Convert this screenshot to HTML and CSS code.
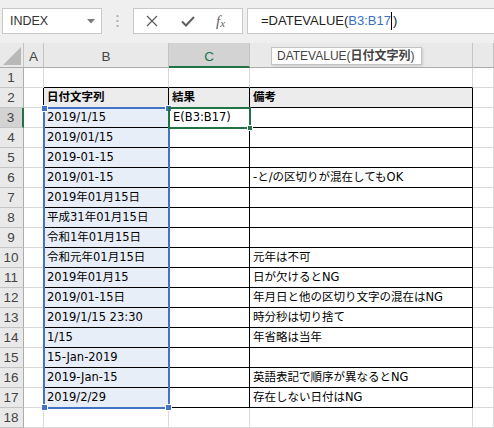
FILE: index.html
```html
<!DOCTYPE html>
<html lang="ja">
<head>
<meta charset="utf-8">
<title>DATEVALUE</title>
<link rel="stylesheet" href="styles.css">
</head>
<body>
<div class="app">
  <div class="bar">
    <div class="namebox">
      <span class="nb-text">INDEX</span>
      <svg class="nb-arrow" width="8" height="5" viewBox="0 0 8 5"><path d="M0 0 H8 L4 4.5 Z" fill="#7a7a7a"/></svg>
    </div>
    <div class="grip">
      <svg width="3" height="12" viewBox="0 0 3 12"><rect x="0.5" y="0" width="2" height="2" fill="#b0b0b0"/><rect x="0.5" y="5" width="2" height="2" fill="#b0b0b0"/><rect x="0.5" y="10" width="2" height="2" fill="#b0b0b0"/></svg>
    </div>
    <div class="fbtns">
      <svg class="ic" width="12" height="12" viewBox="0 0 12 12"><path d="M1 1 L11 11 M11 1 L1 11" stroke="#5f5f5f" stroke-width="1.3" fill="none"/></svg>
      <svg class="ic" width="14" height="11" viewBox="0 0 14 11"><path d="M1 5.5 L5 9.5 L13 1" stroke="#5f5f5f" stroke-width="2" fill="none"/></svg>
      <span class="fx"><i>f</i><sub>x</sub></span>
    </div>
    <div class="finput">=DATEVALUE(<span class="ref">B3:B17</span><span class="caret"></span>)</div>
  </div>

  <div class="sheet">
    <div class="corner"><svg width="18" height="18" viewBox="0 0 18 18"><path d="M18 0 V18 H0 Z" fill="#b8b8b8"/></svg></div>
    <div class="ch">A</div>
    <div class="ch">B</div>
    <div class="ch sel">C</div>
    <div class="ch wide"></div>
    <div class="ch"></div>

    <div class="rh">1</div>
    <div class="c"></div>
    <div class="c top"></div>
    <div class="c top"></div>
    <div class="c top"></div>
    <div class="c"></div>

    <div class="rh">2</div>
    <div class="c lft"></div>
    <div class="c t hd">日付文字列</div>
    <div class="c t hd">結果</div>
    <div class="c t hd">備考</div>
    <div class="c"></div>

    <div class="rh sel">3</div>
    <div class="c lft"></div>
    <div class="c t s">2019/1/15</div>
    <div class="c t act">E(B3:B17)</div>
    <div class="c t"></div>
    <div class="c"></div>

    <div class="rh">4</div>
    <div class="c lft"></div>
    <div class="c t s">2019/01/15</div>
    <div class="c t"></div>
    <div class="c t"></div>
    <div class="c"></div>

    <div class="rh">5</div>
    <div class="c lft"></div>
    <div class="c t s">2019-01-15</div>
    <div class="c t"></div>
    <div class="c t"></div>
    <div class="c"></div>

    <div class="rh">6</div>
    <div class="c lft"></div>
    <div class="c t s">2019/01-15</div>
    <div class="c t"></div>
    <div class="c t">-と/の区切りが混在してもOK</div>
    <div class="c"></div>

    <div class="rh">7</div>
    <div class="c lft"></div>
    <div class="c t s">2019年01月15日</div>
    <div class="c t"></div>
    <div class="c t"></div>
    <div class="c"></div>

    <div class="rh">8</div>
    <div class="c lft"></div>
    <div class="c t s">平成31年01月15日</div>
    <div class="c t"></div>
    <div class="c t"></div>
    <div class="c"></div>

    <div class="rh">9</div>
    <div class="c lft"></div>
    <div class="c t s">令和1年01月15日</div>
    <div class="c t"></div>
    <div class="c t"></div>
    <div class="c"></div>

    <div class="rh">10</div>
    <div class="c lft"></div>
    <div class="c t s">令和元年01月15日</div>
    <div class="c t"></div>
    <div class="c t">元年は不可</div>
    <div class="c"></div>

    <div class="rh">11</div>
    <div class="c lft"></div>
    <div class="c t s">2019年01月15</div>
    <div class="c t"></div>
    <div class="c t">日が欠けるとNG</div>
    <div class="c"></div>

    <div class="rh">12</div>
    <div class="c lft"></div>
    <div class="c t s">2019/01-15日</div>
    <div class="c t"></div>
    <div class="c t">年月日と他の区切り文字の混在はNG</div>
    <div class="c"></div>

    <div class="rh">13</div>
    <div class="c lft"></div>
    <div class="c t s">2019/1/15 23:30</div>
    <div class="c t"></div>
    <div class="c t">時分秒は切り捨て</div>
    <div class="c"></div>

    <div class="rh">14</div>
    <div class="c lft"></div>
    <div class="c t s">1/15</div>
    <div class="c t"></div>
    <div class="c t">年省略は当年</div>
    <div class="c"></div>

    <div class="rh">15</div>
    <div class="c lft"></div>
    <div class="c t s">15-Jan-2019</div>
    <div class="c t"></div>
    <div class="c t"></div>
    <div class="c"></div>

    <div class="rh">16</div>
    <div class="c lft"></div>
    <div class="c t s">2019-Jan-15</div>
    <div class="c t"></div>
    <div class="c t">英語表記で順序が異なるとNG</div>
    <div class="c"></div>

    <div class="rh">17</div>
    <div class="c lft"></div>
    <div class="c t s">2019/2/29</div>
    <div class="c t"></div>
    <div class="c t">存在しない日付はNG</div>
    <div class="c"></div>

    <div class="rh">18</div>
    <div class="c"></div>
    <div class="c"></div>
    <div class="c"></div>
    <div class="c"></div>
    <div class="c"></div>

    <div class="selbox">
      <span class="h h-tl"></span><span class="h h-tr"></span><span class="h h-bl"></span><span class="h h-br"></span>
    </div>
    <div class="actbox"><span class="fill"></span></div>
    <div class="tip">DATEVALUE(<b>日付文字列</b>)</div>
  </div>
</div>
</body>
</html>
```

FILE: styles.css
```css
html, body {
  margin: 0;
  padding: 0;
}
body {
  width: 494px;
  height: 428px;
  overflow: hidden;
  background: #ffffff;
  font-family: "Liberation Sans", "Noto Sans CJK JP", sans-serif;
}
.app {
  width: 494px;
  height: 428px;
  overflow: hidden;
}

/* ---------- formula bar ---------- */
.bar {
  height: 43px;
  box-sizing: border-box;
  padding-top: 8px;
  background: #efefef;
  display: flex;
  align-items: flex-start;
}
.namebox {
  margin-left: 2px;
  width: 100px;
  height: 26px;
  box-sizing: border-box;
  border: 1px solid #c9c9c9;
  background: #fff;
  display: flex;
  align-items: center;
  justify-content: space-between;
  padding: 0 6px 0 7px;
}
.nb-text {
  font-size: 12.5px;
  color: #333;
}
.grip {
  width: 31px;
  height: 26px;
  display: flex;
  align-items: center;
  justify-content: center;
}
.fbtns {
  width: 110px;
  height: 26px;
  box-sizing: border-box;
  border: 1px solid #c9c9c9;
  background: #fff;
  display: flex;
  align-items: center;
  padding-left: 12px;
  gap: 23px;
}
.fx {
  font-family: "Liberation Serif", serif;
  color: #5f5f5f;
  font-size: 15px;
  line-height: 1;
  margin-left: -2px;
}
.fx sub {
  font-style: italic;
  font-size: 11px;
  vertical-align: -1px;
}
.finput {
  margin-left: 4px;
  flex: 1;
  height: 26px;
  box-sizing: border-box;
  border: 1px solid #c9c9c9;
  border-right: none;
  background: #fff;
  padding-left: 13px;
  font-size: 13px;
  line-height: 24px;
  color: #222;
  white-space: nowrap;
}
.ref {
  color: #3b6fc4;
}
.caret {
  display: inline-block;
  width: 1px;
  height: 18px;
  background: #000;
  vertical-align: -5px;
  margin: 0 0.5px;
}

/* ---------- sheet ---------- */
.sheet {
  position: relative;
  display: grid;
  grid-template-columns: 24px 20px 125px 81px 223px 21px;
  grid-template-rows: 25px repeat(18, 20px);
  font-family: "DejaVu Sans", "Noto Sans CJK JP", sans-serif;
  font-size: 11.5px;
}
.corner {
  background: #e9e9e9;
  box-sizing: border-box;
  border-right: 1px solid #c4c4c4;
  border-bottom: 1px solid #ababab;
  display: flex;
  align-items: flex-end;
  justify-content: flex-end;
  padding: 0 2px 2px 0;
}
.ch {
  background: #e9e9e9;
  box-sizing: border-box;
  border-right: 1px solid #c4c4c4;
  border-bottom: 1px solid #ababab;
  font-family: "Liberation Sans", sans-serif;
  font-size: 13.5px;
  color: #444;
  display: flex;
  align-items: center;
  justify-content: center;
  padding-top: 3px;
}
.ch.sel {
  background: #d3d3d3;
  color: #217346;
  border-bottom: 2px solid #217346;
  padding-top: 4px;
}
.rh {
  background: #e9e9e9;
  box-sizing: border-box;
  border-right: 1px solid #ababab;
  border-bottom: 1px solid #c4c4c4;
  font-family: "Liberation Sans", sans-serif;
  font-size: 13.5px;
  color: #444;
  display: flex;
  align-items: center;
  justify-content: center;
  padding-right: 1px;
}
.rh.sel {
  background: #d3d3d3;
  border-right: 2px solid #217346;
}
.c {
  box-sizing: border-box;
  border-right: 1px solid #d9d9d9;
  border-bottom: 1px solid #d9d9d9;
  padding: 0 3px;
  line-height: 19px;
  white-space: nowrap;
  overflow: hidden;
  color: #000;
}
.c.top {
  border-bottom-color: #000;
}
.c.lft {
  border-right-color: #000;
}
.c.t {
  border-right-color: #000;
  border-bottom-color: #000;
}
.c.hd {
  background: #ececec;
  font-weight: bold;
}
.c.s {
  background: #e8eef8;
}
.c.act {
  padding-left: 4px;
}

/* overlays */
.selbox {
  position: absolute;
  left: 43px;
  top: 64px;
  width: 127px;
  height: 302px;
  box-sizing: border-box;
  border: 2px solid #4472c4;
  pointer-events: none;
}
.h {
  position: absolute;
  width: 5px;
  height: 5px;
  background: #4472c4;
  box-shadow: 0 0 0 1px #fff;
}
.h-tl { left: -3px; top: -3px; }
.h-tr { right: -3px; top: -3px; }
.h-bl { left: -3px; bottom: -3px; }
.h-br { right: -3px; bottom: -3px; }
.actbox {
  position: absolute;
  left: 168px;
  top: 64px;
  width: 83px;
  height: 22px;
  box-sizing: border-box;
  border: 2px solid #217346;
  pointer-events: none;
}
.fill {
  position: absolute;
  right: -3px;
  bottom: -3px;
  width: 4px;
  height: 4px;
  background: #217346;
  box-shadow: 0 0 0 1px #fff;
}
.tip {
  position: absolute;
  left: 271px;
  top: 4px;
  height: 18px;
  box-sizing: border-box;
  padding: 0 6px 0 5px;
  background: #fff;
  border: 1px solid #c2c2c2;
  box-shadow: 1px 1px 2px rgba(0,0,0,0.12);
  font-family: "Liberation Sans", "Noto Sans CJK JP", sans-serif;
  font-size: 12px;
  line-height: 16px;
  color: #444;
  white-space: nowrap;
}
.tip b {
  font-weight: bold;
}
```
